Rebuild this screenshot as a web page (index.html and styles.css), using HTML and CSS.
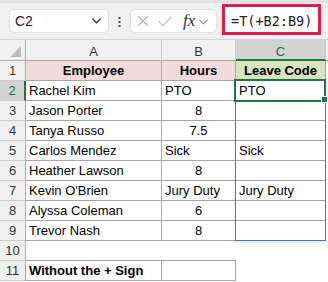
FILE: index.html
```html
<!DOCTYPE html>
<html>
<head>
<meta charset="utf-8">
<link rel="stylesheet" href="styles.css">
</head>
<body>
<div class="app">
  <div class="toolbar">
    <div class="namebox">
      <span class="ref">C2</span>
      <svg class="chev" width="9" height="6" viewBox="0 0 9 6"><polyline points="0.5,0.8 4.5,4.8 8.5,0.8" fill="none" stroke="#333" stroke-width="1.3"/></svg>
    </div>
    <div class="dots">
      <svg width="3" height="12" viewBox="0 0 3 12"><rect x="0.5" y="1" width="2" height="2" fill="#444"/><rect x="0.5" y="5" width="2" height="2" fill="#444"/><rect x="0.5" y="9" width="2" height="2" fill="#444"/></svg>
    </div>
    <div class="fxbox">
      <svg class="ico-x" width="12" height="12" viewBox="0 0 12 12"><path d="M1 1 L11 11 M11 1 L1 11" stroke="#b4b4b4" stroke-width="1.1" fill="none"/></svg>
      <svg class="ico-check" width="14" height="11" viewBox="0 0 14 11"><polyline points="0.8,5.5 4.8,9.8 13.2,0.8" fill="none" stroke="#b4b4b4" stroke-width="1.1"/></svg>
      <span class="fx">fx</span>
      <svg class="ico-chev" width="9" height="6" viewBox="0 0 9 6"><polyline points="0.5,0.8 4.5,4.8 8.5,0.8" fill="none" stroke="#8a8a8a" stroke-width="1.1"/></svg>
    </div>
    <div class="formula">=T(+B2:B9)</div>
  </div>

  <div class="sheet">
    <div class="ch corner"><svg width="12" height="12" viewBox="0 0 12 12"><polygon points="11,0 11,11 0,11" fill="#bdbdbd"/></svg></div>
    <div class="ch">A</div>
    <div class="ch">B</div>
    <div class="ch sel">C</div>
    <div class="ch fill"></div>

    <div class="rh">1</div>
    <div class="c hd pink">Employee</div>
    <div class="c hd pink">Hours</div>
    <div class="c hd green">Leave Code</div>
    <div class="f"></div>

    <div class="rh sel">2</div>
    <div class="c">Rachel Kim</div>
    <div class="c">PTO</div>
    <div class="c">PTO</div>
    <div class="f"></div>

    <div class="rh">3</div>
    <div class="c">Jason Porter</div>
    <div class="c num">8</div>
    <div class="c"></div>
    <div class="f"></div>

    <div class="rh">4</div>
    <div class="c">Tanya Russo</div>
    <div class="c num">7.5</div>
    <div class="c"></div>
    <div class="f"></div>

    <div class="rh">5</div>
    <div class="c">Carlos Mendez</div>
    <div class="c">Sick</div>
    <div class="c">Sick</div>
    <div class="f"></div>

    <div class="rh">6</div>
    <div class="c">Heather Lawson</div>
    <div class="c num">8</div>
    <div class="c"></div>
    <div class="f"></div>

    <div class="rh">7</div>
    <div class="c">Kevin O'Brien</div>
    <div class="c">Jury Duty</div>
    <div class="c">Jury Duty</div>
    <div class="f"></div>

    <div class="rh">8</div>
    <div class="c">Alyssa Coleman</div>
    <div class="c num">6</div>
    <div class="c"></div>
    <div class="f"></div>

    <div class="rh">9</div>
    <div class="c">Trevor Nash</div>
    <div class="c num">8</div>
    <div class="c"></div>
    <div class="f"></div>

    <div class="rh">10</div>
    <div class="c open"></div>
    <div class="c open"></div>
    <div class="e"></div>
    <div class="f"></div>

    <div class="rh">11</div>
    <div class="c bold">Without the + Sign</div>
    <div class="c"></div>
    <div class="e"></div>
    <div class="f"></div>
  </div>

  <div class="selection"></div>
  <div class="active"></div>
  <div class="handle"></div>
</div>
</body>
</html>
```

FILE: styles.css
```css
html, body {
  margin: 0;
  padding: 0;
  background: #ffffff;
}

.app {
  position: relative;
  width: 328px;
  height: 282px;
  overflow: hidden;
  font-family: "Liberation Sans", Arial, sans-serif;
  background: #ffffff;
}

/* ---------- toolbar ---------- */
.toolbar {
  display: flex;
  align-items: flex-start;
  height: 40px;
  box-sizing: border-box;
  background: #f0f0f0;
  border-top: 3px solid #e3e3e3;
  border-bottom: 1px solid #d4d4d4;
}

.namebox {
  display: flex;
  align-items: center;
  box-sizing: border-box;
  margin-left: 9px;
  margin-top: 6px;
  width: 100px;
  height: 24px;
  padding-left: 5px;
  background: #ffffff;
  border: 1px solid #e0e0e0;
  border-radius: 5px;
}

.ref {
  font-size: 14px;
  color: #222;
}

.chev {
  margin-left: auto;
  margin-right: 7px;
}

.dots {
  display: flex;
  justify-content: center;
  width: 21px;
  margin-top: 13px;
}

.fxbox {
  display: flex;
  align-items: center;
  box-sizing: border-box;
  width: 87px;
  height: 24px;
  margin-top: 6px;
  background: #ffffff;
  border: 1px solid #e0e0e0;
  border-radius: 5px;
}

.ico-x {
  margin-left: 6px;
}

.ico-check {
  margin-left: 9px;
}

.fx {
  margin-left: 11px;
  font-family: "Liberation Serif", "Times New Roman", serif;
  font-style: italic;
  font-size: 17px;
  color: #333;
  line-height: 20px;
}

.ico-chev {
  margin-left: 4px;
  margin-top: 2px;
}

.formula {
  box-sizing: border-box;
  margin-left: 5px;
  margin-top: 1px;
  width: 99px;
  height: 31px;
  padding-left: 6px;
  padding-top: 3px;
  background: #ffffff;
  border: 3px solid #e5194c;
  font-family: "DejaVu Sans Mono", monospace;
  font-size: 13.5px;
  line-height: 23px;
  color: #222;
  white-space: nowrap;
}

/* ---------- sheet ---------- */
.sheet {
  display: grid;
  grid-template-columns: 26px 136px 74px 90px 2px;
  grid-template-rows: 21px repeat(11, 20px);
  font-size: 13px;
  color: #000;
}

.sheet > div {
  box-sizing: border-box;
  white-space: nowrap;
  overflow: hidden;
}

.ch {
  background: #f0f0f0;
  border-right: 1px solid #cdcdcd;
  border-bottom: 1px solid #a9a9a9;
  text-align: center;
  padding-top: 2px;
  line-height: 19px;
  color: #333;
}

.ch.corner {
  position: relative;
  border-right-color: #a9a9a9;
}

.ch.corner svg {
  position: absolute;
  right: 3px;
  bottom: 2px;
}

.ch.sel {
  background: #d3d3d3;
  color: #1e6e41;
  border-bottom: 2px solid #217346;
}

.ch.fill {
  border-right: none;
}

.rh {
  background: #f0f0f0;
  border-right: 1px solid #a9a9a9;
  border-bottom: 1px solid #cdcdcd;
  text-align: center;
  line-height: 19px;
  color: #333;
}

.rh.sel {
  background: #d3d3d3;
  color: #1e6e41;
  border-right: 2px solid #217346;
}

.c {
  border-right: 1px solid #a6a6a6;
  border-bottom: 1px solid #a6a6a6;
  padding: 0 3px;
  line-height: 19px;
}

.c.hd {
  font-weight: bold;
  text-align: center;
}

.c.pink {
  background: #f2dcdb;
}

.c.green {
  background: #d8e4bc;
}

.c.num {
  text-align: center;
}

.c.open {
  border-right: none;
}

.c.bold {
  font-weight: bold;
}

.e, .f {
  background: #ffffff;
}

/* ---------- overlays ---------- */
.selection {
  position: absolute;
  left: 235px;
  top: 80px;
  width: 91px;
  height: 161px;
  box-sizing: border-box;
  border: 1px solid #4472c4;
  box-shadow: 0 2px 3px rgba(0, 0, 0, 0.10);
}

.active {
  position: absolute;
  left: 234px;
  top: 79px;
  width: 92px;
  height: 23px;
  box-sizing: border-box;
  border: 2px solid #217346;
}

.handle {
  position: absolute;
  left: 322px;
  top: 97px;
  width: 5px;
  height: 5px;
  background: #217346;
  outline: 1px solid #ffffff;
}
```
